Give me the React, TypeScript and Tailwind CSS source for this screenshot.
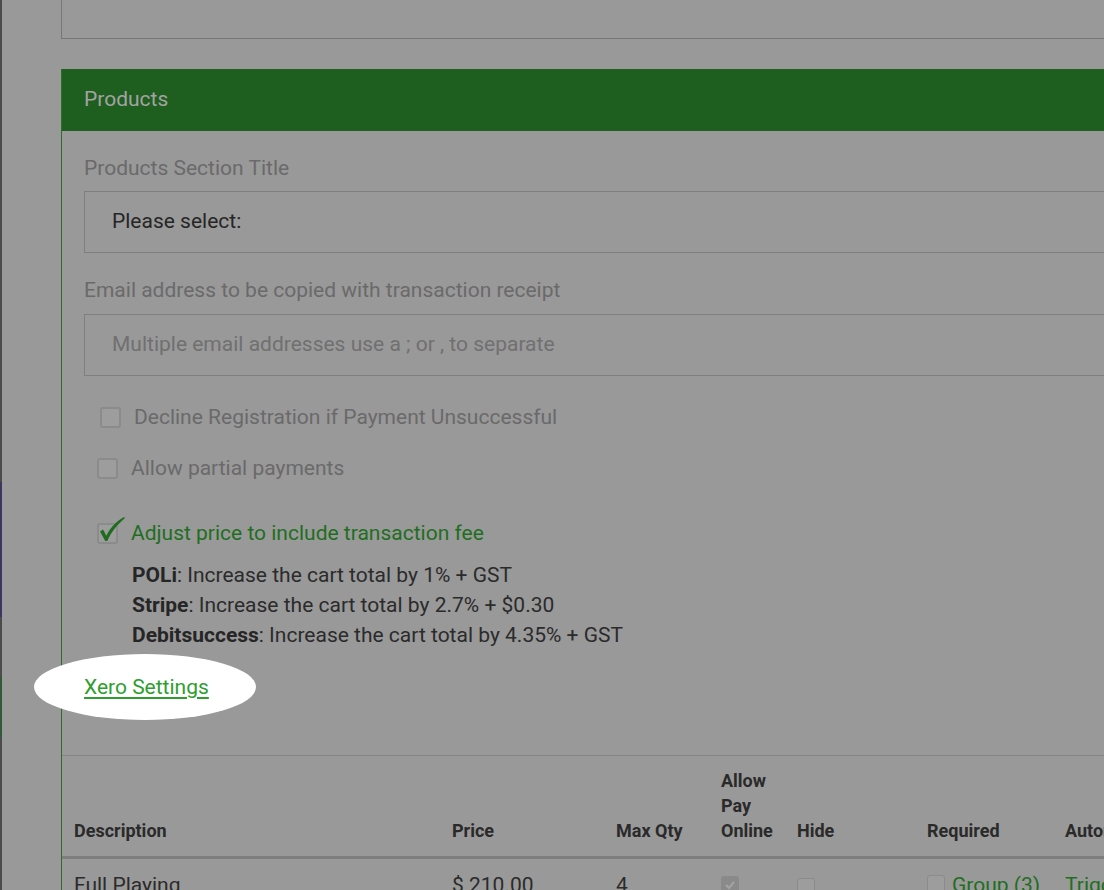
import React from "react";

const Box = ({ className = "" }: { className?: string }) => (
  <span
    className={`inline-block shrink-0 rounded-[3px] border-2 border-[#8b8b8b] bg-[#9d9d9d] ${className}`}
  />
);

const CheckRow = ({
  label,
  offset,
  checked,
}: {
  label: string;
  offset: string;
  checked?: boolean;
}) => (
  <div className={`flex items-center ${offset}`}>
    <span className="relative flex h-[21px] w-[21px]">
      <Box className="h-[21px] w-[21px]" />
      {checked && (
        <svg
          viewBox="0 0 26 24"
          className="absolute -top-[6px] left-[2px] h-[25px] w-[27px]"
        >
          <path
            d="M1 14 L4 12 L7 18 C11 10 17 4 24 0 L25 1 C18 7 12 14 8 23 L6 23 Z"
            fill="#1f6b1f"
          />
        </svg>
      )}
    </span>
    <span
      className={`ml-[13px] text-[21px] leading-[26px] ${
        checked ? "text-[#1f6e1f]" : "text-[#6a6a6a]"
      }`}
    >
      {label}
    </span>
  </div>
);

const fees = [
  ["POLi", "Increase the cart total by 1% + GST"],
  ["Stripe", "Increase the cart total by 2.7% + $0.30"],
  ["Debitsuccess", "Increase the cart total by 4.35% + GST"],
];

export default function App() {
  return (
    <div
      className="relative flex h-[890px] w-[1104px] items-start overflow-hidden bg-[#999999] text-[#2b2b2b]"
      style={{ fontFamily: "Roboto, 'Liberation Sans', sans-serif" }}
    >
      <div className="flex h-[890px] w-[2px] shrink-0 flex-col bg-[#4b4b4b]">
        <div className="h-[482px] shrink-0" />
        <div className="h-[135px] shrink-0 bg-[#3b3760]" />
        <div className="h-[60px] shrink-0" />
        <div className="h-[60px] shrink-0 bg-[#2f5a3a]" />
      </div>

      <div className="ml-[59px] flex w-[1200px] shrink-0 flex-col">
        <div className="h-[39px] shrink-0 border-b border-l border-[#777777]" />

        <section className="mt-[30px] shrink-0 border-l border-[#2a6e2a]">
          <div className="flex h-[62px] items-center bg-[#1e5e1e] pl-[22px] text-[21px] text-[#a3a3a3]">
            Products
          </div>

          <div className="px-[22px]">
            <div className="mt-[24px] mb-[10px] text-[21px] leading-[26px] text-[#6a6a6a]">
              Products Section Title
            </div>
            <div className="flex h-[62px] items-center border border-[#7f7f7f] pl-[27px] text-[21px] text-[#262626]">
              Please select:
            </div>

            <div className="mt-[24px] mb-[11px] text-[21px] leading-[26px] text-[#6a6a6a]">
              Email address to be copied with transaction receipt
            </div>
            <div className="flex h-[62px] items-center border border-[#7f7f7f] pl-[27px] text-[21px] text-[#707070]">
              Multiple email addresses use a ; or , to separate
            </div>

            <div className="mt-[28px] flex flex-col">
              <CheckRow
                label="Decline Registration if Payment Unsuccessful"
                offset="ml-[16px]"
              />
              <CheckRow
                label="Allow partial payments"
                offset="ml-[13px] mt-[25px]"
              />
              <CheckRow
                label="Adjust price to include transaction fee"
                offset="ml-[13px] mt-[39px]"
                checked
              />
            </div>

            <div className="mt-[14px] ml-[48px] flex flex-col text-[21px] leading-[30px] text-[#2b2b2b]">
              {fees.map(([name, text]) => (
                <div key={name}>
                  <span className="font-bold text-[#262626]">{name}</span>: {text}
                </div>
              ))}
            </div>

            <div className="relative mt-[22px] h-[30px] w-fit">
              <span className="absolute top-1/2 left-[-50px] h-[66px] w-[222px] -translate-y-1/2 rounded-[50%] bg-white" />
              <a
                href="#"
                className="relative text-[21px] leading-[30px] text-[#2e9e2e] underline underline-offset-[3px]"
              >
                Xero Settings
              </a>
            </div>
          </div>

          <div className="mt-[53px] border-t border-[#858585]">
            <table className="w-[1200px] table-fixed border-collapse">
              <colgroup>
                <col className="w-[378px]" />
                <col className="w-[164px]" />
                <col className="w-[105px]" />
                <col className="w-[76px]" />
                <col className="w-[130px]" />
                <col className="w-[138px]" />
                <col />
              </colgroup>
              <thead>
                <tr className="border-b-[3px] border-[#7e7e7e] text-left align-bottom text-[18px] leading-[25px] font-bold text-[#2a2a2a]">
                  <th className="px-3 pt-[12px] pb-[13px]">Description</th>
                  <th className="px-3 pt-[12px] pb-[13px]">Price</th>
                  <th className="px-3 pt-[12px] pb-[13px]">Max Qty</th>
                  <th className="pt-[12px] pb-[13px] pl-3">
                    Allow
                    <br />
                    Pay
                    <br />
                    Online
                  </th>
                  <th className="pt-[12px] pb-[13px] pl-3">Hide</th>
                  <th className="pt-[12px] pb-[13px] pl-3">Required</th>
                  <th className="pt-[12px] pb-[13px] pl-3">Automatic</th>
                </tr>
              </thead>
              <tbody>
                <tr className="align-top text-[21px] leading-[26px] text-[#2b2b2b]">
                  <td className="px-3 pt-[13px]">Full Playing</td>
                  <td className="px-3 pt-[13px]">$ 210.00</td>
                  <td className="px-3 pt-[13px]">4</td>
                  <td className="pt-[17px] pl-3">
                    <span className="flex h-[18px] w-[18px] items-center justify-center rounded-[3px] bg-[#8a8a8a]">
                      <svg viewBox="0 0 12 12" className="h-[12px] w-[12px]">
                        <path
                          d="M2 6 L5 9 L10 3"
                          stroke="#a4a4a4"
                          strokeWidth="2"
                          fill="none"
                        />
                      </svg>
                    </span>
                  </td>
                  <td className="pt-[17px] pl-3">
                    <Box className="h-[18px] w-[18px] border-[1.5px]" />
                  </td>
                  <td className="pt-[13px] pl-3">
                    <div className="flex items-start gap-[7px]">
                      <Box className="mt-[3px] h-[18px] w-[18px] border-[1.5px]" />
                      <span className="text-[#1f6e1f]">Group (3)</span>
                    </div>
                  </td>
                  <td className="pt-[13px] pl-3 text-[#1f6e1f]">Trigger</td>
                </tr>
              </tbody>
            </table>
          </div>
        </section>
      </div>
    </div>
  );
}
